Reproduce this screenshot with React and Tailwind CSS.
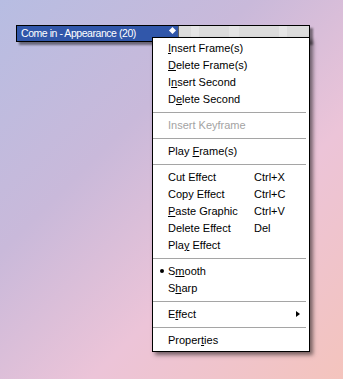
const items = [
  { label: ["", "I", "nsert Frame(s)"] },
  { label: ["", "D", "elete Frame(s)"] },
  { label: ["I", "n", "sert Second"] },
  { label: ["D", "e", "lete Second"] },
  { sep: true },
  { label: ["Insert Keyframe", "", ""], disabled: true },
  { sep: true },
  { label: ["Play ", "F", "rame(s)"] },
  { sep: true },
  { label: ["Cut Effect", "", ""], key: "Ctrl+X" },
  { label: ["Copy Effect", "", ""], key: "Ctrl+C" },
  { label: ["", "P", "aste Graphic"], key: "Ctrl+V" },
  { label: ["Delete Effect", "", ""], key: "Del" },
  { label: ["Pla", "y", " Effect"] },
  { sep: true },
  { label: ["S", "m", "ooth"], bullet: true },
  { label: ["S", "h", "arp"] },
  { sep: true },
  { label: ["E", "f", "fect"], sub: true },
  { sep: true },
  { label: ["Proper", "t", "ies"] },
];

function MenuRow({ item }) {
  const [a, u, b] = item.label;
  return (
    <div
      className={`relative flex h-[17px] items-center pl-[15px] ${
        item.disabled ? "text-[#a3a3a3]" : "text-black"
      }`}
    >
      {item.bullet && (
        <span className="absolute left-[7px] top-[6px] h-[4px] w-[4px] rounded-full bg-black" />
      )}
      <span className="w-[86px] whitespace-nowrap">
        {a}
        {u && <span className="underline underline-offset-[1px]">{u}</span>}
        {b}
      </span>
      {item.key && <span className="whitespace-nowrap">{item.key}</span>}
      {item.sub && (
        <span className="absolute left-[143px] top-[5px] h-0 w-0 border-y-[3.5px] border-l-[4px] border-y-transparent border-l-black" />
      )}
    </div>
  );
}

export default function App() {
  return (
    <div
      className="relative h-[379px] w-[343px] overflow-hidden bg-[linear-gradient(135deg,#b7bde2_0%,#c9b9da_35%,#ecc4d8_65%,#f4c4bd_100%)] pt-[25px] pl-[16px]"
      style={{ fontFamily: '"Liberation Sans", Arial, sans-serif' }}
    >
      <div className="flex h-[17px] w-[294px] border border-black shadow-[3px_3px_2px_rgba(0,0,0,0.45)]">
        <div className="relative flex w-[161px] items-center bg-[#3157aa] pl-[4px] text-[10.5px] tracking-[-0.45px] text-white">
          Come in - Appearance (20)
          <span className="absolute right-[3px] top-[2px] h-[5px] w-[5px] rotate-45 bg-white" />
        </div>
        <div className="w-[1px] bg-[#606060]" />
        <div className="flex flex-1 bg-[#dcdcdc]">
          <div className="w-[12px]" />
          <div className="w-[8px] bg-[#e6e6e6]" />
          <div className="w-[30px]" />
          <div className="w-[10px] bg-[#e4e4e4]" />
          <div className="w-[40px]" />
          <div className="w-[8px] bg-[#e6e6e6]" />
        </div>
      </div>

      <div className="absolute left-[152px] top-[37px] w-[158px] border border-black bg-white pt-[2px] pb-[2px] text-[11px] shadow-[3px_3px_4px_rgba(0,0,0,0.5)]">
        {items.map((item, i) =>
          item.sep ? (
            <div key={i} className="py-[4px] pr-[3px]">
              <div className="h-px bg-[#a5a5a5]" />
            </div>
          ) : (
            <MenuRow key={i} item={item} />
          )
        )}
      </div>
    </div>
  );
}
